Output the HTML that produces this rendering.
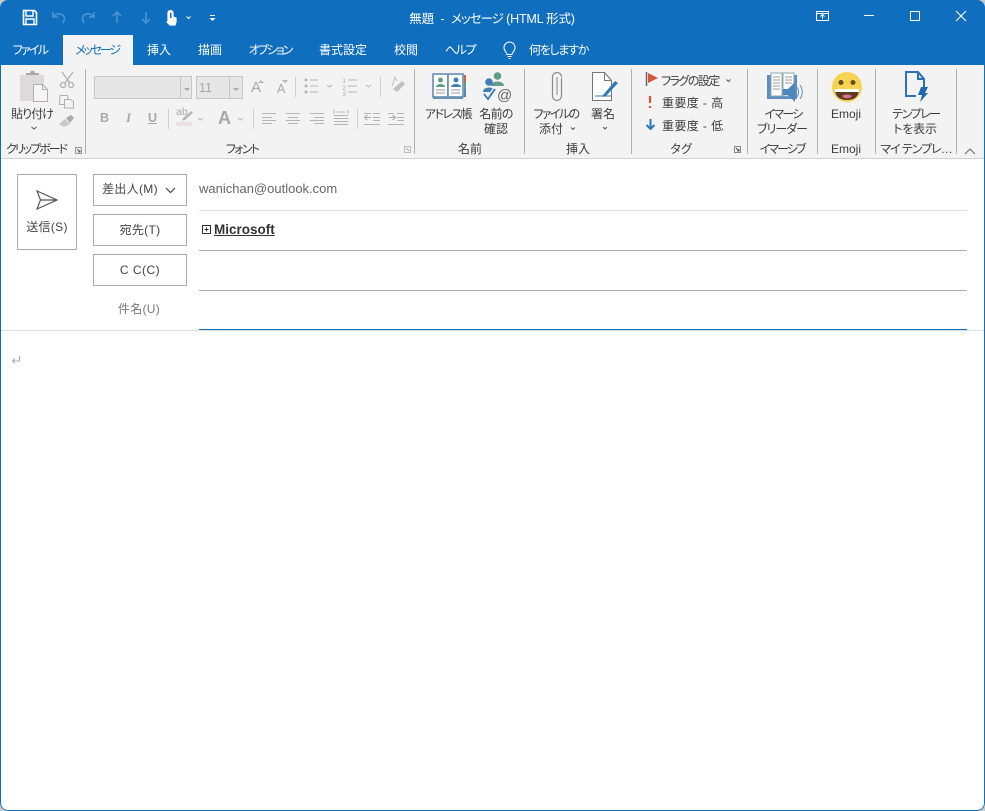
<!DOCTYPE html>
<html lang="ja"><head><meta charset="utf-8"><title>無題 - メッセージ (HTML 形式)</title>
<style>
html,body{margin:0;padding:0;background:#c8c8c8;}
body{width:985px;height:811px;overflow:hidden;position:relative;font-family:"Liberation Sans","Noto Sans CJK JP",sans-serif;font-feature-settings:"palt";}
#w{position:absolute;left:0;top:0;width:985px;height:811px;background:#fff;border-radius:8px 8px 8px 8px;overflow:hidden;}
.a{position:absolute;}
.t{position:absolute;white-space:nowrap;font-size:12px;line-height:16px;color:#3c3c3c;transform:translateX(-50%);}
.l{position:absolute;white-space:nowrap;font-size:12px;line-height:16px;color:#3c3c3c;}
.w{color:#fff;}
.sep{position:absolute;top:69px;width:1px;height:85px;background:#b0b0b0;}
.btn{position:absolute;left:93px;width:92px;height:30px;border:1px solid #ababab;background:#fff;}
svg{position:absolute;overflow:visible;}
.g{color:#a8a8a8;}
</style></head><body>
<div id="w">
<div class="a" style="left:0;top:0;width:985px;height:65px;background:#106ebe"></div>
<div class="a" style="left:0;top:65px;width:985px;height:93px;background:#f3f3f3"></div>
<div class="a" style="left:0;top:158px;width:985px;height:1px;background:#d2d2d2"></div>
<div class="a" style="left:63px;top:35px;width:70px;height:30px;background:#f3f3f3"></div>

<!-- QAT -->
<svg style="left:0;top:0" width="230" height="35" fill="none">
<path d="M23.500 10.500h11l2 2v12h-13z" stroke="#fff" stroke-width="1.600"/><path d="M26 11v5h7v-5M26 24v-5h8v5" stroke="#fff" stroke-width="1.400"/>
<g stroke="#4c93d0" stroke-width="1.600"><path d="M53 12v5h5M53.500 17c3-5 11-4 11 2 0 2-1 3-2 4"/><path d="M94 12v5h-5M93.500 17c-3-5-11-4-11 2 0 2 1 3 2 4"/><path d="M117 23V12M113 16l4-4 4 4"/><path d="M146 12v11M142 19l4 4 4-4"/></g>
<path d="M168 21v-8a2.500 2.500 0 0 1 5 0v4l3 1v4l-1 3h-5l-3-3z" fill="#fff" stroke="#fff" stroke-width="1.200"/><path d="M170 13a1 1 0 0 1 1.500 0v5h-1.500z" fill="#106ebe"/>
<path d="M186.500 16.500l2 2 2-2" stroke="#fff" stroke-width="1"/><path d="M210 15.500h5" stroke="#fff"/><path d="M209.500 18h6l-3 3z" fill="#fff"/>
</svg>
<div class="t w" style="left:492px;top:11px;font-size:12.500px;letter-spacing:-.2px">無題 &nbsp;- &nbsp;<span style="letter-spacing:-1px">メッセージ</span> (HTML 形式)</div>
<svg style="left:810px;top:4px" width="170" height="22" fill="none" stroke="#fff">
<path d="M6.500 7.500h12v9h-12zM6.500 9.500h12" stroke-width="1"/><path d="M12.500 15v-4M10.500 12.500l2-2 2 2" stroke-width="1"/>
<path d="M54 11.500h10"/><path d="M100.500 7.500h9v9h-9z"/><path d="M146 7l10 10M156 7l-10 10" stroke-width="1.100"/>
</svg>

<!-- tabs -->
<div class="t w" style="left:30px;top:42px;letter-spacing:-1.700px">ファイル</div>
<div class="t" style="left:97px;top:42px;color:#106ebe;letter-spacing:-2.200px">メッセージ</div>
<div class="t w" style="left:159px;top:42px">挿入</div>
<div class="t w" style="left:210px;top:42px">描画</div>
<div class="t w" style="left:270px;top:42px;letter-spacing:-2px">オプション</div>
<div class="t w" style="left:343px;top:42px">書式設定</div>
<div class="t w" style="left:406px;top:42px">校閲</div>
<div class="t w" style="left:460px;top:42px;letter-spacing:-1.300px">ヘルプ</div>
<svg style="left:500px;top:40px" width="20" height="20" fill="none" stroke="#fff"><path d="M7 14.500c0-2-3-3-3-7a5.500 5.500 0 0 1 11 0c0 4-3 5-3 7zM7.500 16.500h4M8.500 18.500h2" stroke-width="1"/></svg>
<div class="l w" style="left:529px;top:42px;letter-spacing:-1.300px">何をしますか</div>

<!-- separators -->
<div class="sep" style="left:85px"></div><div class="sep" style="left:414px"></div><div class="sep" style="left:524px"></div><div class="sep" style="left:631px"></div><div class="sep" style="left:747px"></div><div class="sep" style="left:817px"></div><div class="sep" style="left:875px"></div><div class="sep" style="left:956px"></div>

<!-- clipboard -->
<svg style="left:0;top:65px" width="90" height="90" fill="none">
<path d="M20 10h24v26H20z" fill="#dcdadb"/><path d="M26 10V8h4c0-3 5-3 5 0h4v2z" fill="#a9a7a8"/>
<path d="M33.500 19.500h9l5 5v12h-14z" fill="#f8f5f7" stroke="#b0b0b0"/><path d="M42.500 19.500v5h5" stroke="#b0b0b0"/>
<g stroke="#b0b0b0" stroke-width="1.300"><path d="M62 7l8 11M73 7l-8 11"/><circle cx="63" cy="20" r="2.500"/><circle cx="71" cy="20" r="2.500"/></g>
<path d="M60 30.500h7l1 1v8h-8.500z" fill="#f3f3f3" stroke="#b0b0b0"/><path d="M64.500 34.500h6l3 2v6.500h-9z" fill="#f3f3f3" stroke="#b0b0b0"/>
<path d="M66 53l5-3 3 3-4 5z" fill="#aaa"/><path d="M59 59l6-5 5 5-6 3z" fill="#c8c8c8"/>
<path d="M31.500 62l2.500 2 2.500-2" stroke="#555"/>
<path d="M75.500 82.500h6v6h-6z" stroke="#999"/><path d="M77 84l3 3M80 85v2h-2" stroke="#666"/>
</svg>
<div class="t" style="left:32px;top:106px;letter-spacing:-1px">貼り付け</div>
<div class="t" style="left:36px;top:141px;letter-spacing:-2px">クリップボード</div>

<!-- font -->
<div class="a" style="left:94px;top:76px;width:98px;height:23px;background:#e6e6e6;border:1px solid #c6c6c6;box-sizing:border-box"></div>
<div class="a" style="left:180px;top:76px;width:1px;height:23px;background:#c6c6c6"></div>
<div class="a" style="left:196px;top:76px;width:47px;height:23px;background:#e6e6e6;border:1px solid #c6c6c6;box-sizing:border-box"></div>
<div class="a" style="left:229px;top:76px;width:1px;height:23px;background:#c6c6c6"></div>
<div class="l g" style="left:199px;top:80px;font-size:12.500px">11</div>
<div class="l g" style="left:251px;top:80px;font-size:15px;line-height:16px">A</div>
<div class="l g" style="left:277px;top:82px;font-size:12.500px;line-height:14px">A</div>
<div class="l g" style="left:218px;top:110px;font-size:18px;font-weight:bold;">A</div>
<div class="l g" style="left:176px;top:106px;font-size:10.500px;line-height:12px">ab</div>
<div class="l g" style="left:342.500px;top:79px;font-size:6px;line-height:6.500px;white-space:pre">1
2
3</div>
<svg style="left:0;top:65px" width="415" height="93" fill="none">
<path d="M184 23l3 3 3-3zM233 23l3 3 3-3z" fill="#aaa"/>
<path d="M258 18h6l-3-3zM282 15h6l-3 3z" fill="#b5b5b5"/>
<path d="M295.500 12v20M380.500 12v20M168.500 44v20M253.500 44v20M357.500 44v20" stroke="#cfcfcf"/>
<g fill="#b5b5b5"><circle cx="306" cy="15" r="1.500"/><circle cx="306" cy="21" r="1.500"/><circle cx="306" cy="27" r="1.500"/></g>
<path d="M310 15h8M310 21h8M310 27h8M348 15h9M348 21h9M348 27h9" stroke="#b5b5b5"/>
<path d="M327 20l2.500 2 2.500-2M366 20l2.500 2 2.500-2M198 53l2.500 2 2.500-2M238 53l2.500 2 2.500-2" stroke="#b5b5b5"/>
<path d="M392 21l3-9 2 4" stroke="#c0c0c0"/><path d="M393 24l9-8 3 3-8 8z" fill="#c0c0c0"/>
<path d="M176 57h16v4h-16z" fill="#eadfe7"/><path d="M183 55l9-8" stroke="#b0b0b0" stroke-width="2.400"/>
<path d="M262 48.500h14M262 52.500h10M262 55.500h14M262 58.500h10M286 48.500h14M288 52.500h10M286 55.500h14M288 58.500h10M310 48.500h14M314 52.500h10M310 55.500h14M314 58.500h10M334 50.500h14M334 53.500h14M334 56.500h14M334 59.500h14M334 45v4M348 45v4M337 47h8" stroke="#b5b5b5"/>
<path d="M373 48.500h7M373 52.500h7M373 55.500h7M364 59.500h16M397 48.500h7M397 52.500h7M397 55.500h7M388 59.500h16" stroke="#b5b5b5"/>
<path d="M364 48.500h7M388 48.500h6" stroke="#b5b5b5"/>
<path d="M365 52.500h6M367.500 50l-3 2.500 3 2.500M389 52.500h6M392.500 50l3 2.500-3 2.500" stroke="#a8a8a8"/>
<path d="M404.500 81.500h6v6h-6z" stroke="#bbb"/><path d="M406 83l3 3" stroke="#aaa"/>
</svg>
<div class="l g" style="left:100px;top:110px;font-weight:bold;font-size:12.500px">B</div>
<div class="l g" style="left:126px;top:110px;font-family:'Liberation Serif';font-style:italic;font-weight:bold;font-size:13px">I</div>
<div class="l g" style="left:148px;top:110px;font-weight:bold;font-size:12.500px;text-decoration:underline">U</div>
<div class="t" style="left:242px;top:141px;letter-spacing:-1.700px">フォント</div>

<!-- names -->
<svg style="left:425px;top:65px" width="100" height="45" fill="none">
<path d="M8 9h14c1 0 1 1 1 2v21H8z" fill="#fff" stroke="#5f84ad" stroke-width="1.500"/><path d="M38 9H24c-1 0-1 1-1 2v21h15z" fill="#fff" stroke="#5f84ad" stroke-width="1.500"/>
<path d="M8 33h30" stroke="#6b8fb8" stroke-width="2"/><path d="M39 10h2v7h-2z" fill="#c8643c"/><path d="M39 17h2v7h-2z" fill="#5b9e84"/><path d="M39 24h2v8h-2z" fill="#4a86c0"/>
<circle cx="15.500" cy="15" r="2.500" fill="#5f9e88"/><path d="M11 22c0-4 9-4 9 0z" fill="#5f9e88"/><circle cx="31" cy="15" r="2.500" fill="#3f7fb8"/><path d="M26 22c0-4 10-4 10 0z" fill="#3f7fb8"/>
<path d="M11 25h9M11 28h9M26 25h9M26 28h9" stroke="#999"/>
<circle cx="72.500" cy="11" r="3.800" fill="#5f9e88"/><path d="M66 21c0-6 13-6 13 0z" fill="#5f9e88"/><circle cx="64" cy="17" r="3.800" fill="#3f7fb8"/><path d="M58 27c0-6 12-6 12 0z" fill="#3f7fb8"/>
<path d="M59 29l4 5 7-10" stroke="#f3f3f3" stroke-width="4.500"/><path d="M59 29l4 5 7-10" stroke="#2f78b8" stroke-width="1.800"/>
</svg>
<div class="l" style="left:497px;top:87px;font-size:15px;line-height:18px;color:#666">@</div>
<div class="t" style="left:448px;top:106px;letter-spacing:-1.600px">アドレス帳</div>
<div class="t" style="left:496px;top:106px;letter-spacing:-.7px">名前の</div>
<div class="t" style="left:496px;top:121px">確認</div>
<div class="t" style="left:470px;top:141px">名前</div>

<!-- insert -->
<svg style="left:530px;top:65px" width="100" height="75" fill="none">
<path d="M31.500 13v18a4 4 0 0 1-9 0V12a4.500 4.500 0 0 1 9 0" stroke="#8a8a8a" stroke-width="1.200"/><path d="M27 12v18" stroke="#8a8a8a"/>
<path d="M62.500 7.500h12l7 8v20h-19z" fill="#fff" stroke="#777"/><path d="M74.500 7.500v8h7" stroke="#777"/>
<path d="M65 31h17" stroke="#2f78b8"/><path d="M73 30l-1 1 1 1 3-1 12-13-3-2z" fill="#2f78b8"/>
<path d="M41 62.500l2 2 2-2M73 62l2 2 2-2" stroke="#555"/>
</svg>
<div class="t" style="left:556px;top:106px;letter-spacing:-1.600px">ファイルの</div>
<div class="t" style="left:551px;top:121px">添付</div>
<div class="t" style="left:603px;top:106px">署名</div>
<div class="t" style="left:578px;top:141px">挿入</div>

<!-- tags -->
<svg style="left:640px;top:65px" width="105" height="93" fill="none">
<path d="M6.500 7v14" stroke="#666" stroke-width="1.500"/><path d="M8 8l10 5-10 5z" fill="#d9553a"/>
<path d="M10 31v7" stroke="#d9553a" stroke-width="2.200"/><path d="M10 41v2" stroke="#d9553a" stroke-width="2.200"/>
<path d="M10.500 54v10M6.500 60l4 4 4-4" stroke="#2f78b8" stroke-width="2"/>
<path d="M86.500 14.500l2 2 2-2" stroke="#555"/>
<path d="M94.500 81.500h6v6h-6z" stroke="#888"/><path d="M96 83l3 3M99 84v2h-2" stroke="#555"/>
</svg>
<div class="l" style="left:661px;top:73px;letter-spacing:-1.500px">フラグの設定</div>
<div class="l" style="left:662px;top:95px;letter-spacing:.4px">重要度 - 高</div>
<div class="l" style="left:662px;top:118px;letter-spacing:.4px">重要度 - 低</div>
<div class="t" style="left:681px;top:141px">タグ</div>

<!-- immersive -->
<svg style="left:765px;top:65px" width="40" height="40" fill="none">
<path d="M2 10h30v24H2z" fill="#5b8fc4"/><path d="M6 8h11v23H6zM18 8h11v23H18z" fill="#fff" stroke="#8aa"/>
<path d="M8 12h7M8 15h7M8 18h7M8 21h7M8 24h7M20 12h7M20 15h7M20 18h7" stroke="#999"/>
<path d="M18 24h5l7-7v20l-7-7h-5z" fill="#4d86bd"/><path d="M32 22c2 3 2 7 0 10M35 20c3 4 3 10 0 14" stroke="#5b8fc4"/>
</svg>
<div class="t" style="left:783px;top:106px;letter-spacing:-1.700px">イマーシ</div>
<div class="t" style="left:782px;top:121px;letter-spacing:-1px">ブリーダー</div>
<div class="t" style="left:782px;top:141px;letter-spacing:-2px">イマーシブ</div>

<!-- emoji -->
<svg style="left:825px;top:65px" width="45" height="45">
<circle cx="22" cy="22" r="15" fill="#f7d354"/><circle cx="16" cy="17.500" r="2.500" fill="#6b4a2a"/><circle cx="28" cy="17.500" r="2.500" fill="#6b4a2a"/>
<path d="M10 24h24c0 8-5 11-12 11s-12-3-12-11z" fill="#5d3a25"/><path d="M10 24h24v3H10z" fill="#fff"/><path d="M17 31c2-2 8-2 10 0-2 3-8 3-10 0z" fill="#d9748a"/>
</svg>
<div class="t" style="left:846px;top:106px">Emoji</div>
<div class="t" style="left:846px;top:141px">Emoji</div>

<!-- template -->
<svg style="left:890px;top:65px" width="45" height="45" fill="none">
<path d="M26 31H16V7h12l6 7v8" stroke="#2a72b8" stroke-width="2"/><path d="M28 7v7h6" stroke="#2a72b8" stroke-width="2"/>
<path d="M31 22h7l-3 6h3l-8 9 2-7h-4z" fill="#1f68ac"/>
</svg>
<div class="t" style="left:916px;top:106px;letter-spacing:-1.400px">テンプレー</div>
<div class="t" style="left:915px;top:121px;letter-spacing:-.2px">トを表示</div>
<div class="t" style="left:916px;top:141px;letter-spacing:-1px">マイ テンプレ…</div>
<svg style="left:964px;top:148px" width="14" height="8" fill="none"><path d="M1 6l5-5 5 5" stroke="#666"/></svg>

<!-- form -->
<div class="a" style="left:17px;top:174px;width:58px;height:74px;border:1px solid #ababab"></div>
<svg style="left:36px;top:190px" width="24" height="20" fill="none"><path d="M1 1l20 9-20 9 3.500-9zM4.500 10H21" stroke="#555" stroke-width="1.200"/></svg>
<div class="t" style="left:47px;top:219px;color:#444;letter-spacing:.3px">送信(S)</div>

<div class="btn" style="top:174px"></div><div class="btn" style="top:214px"></div><div class="btn" style="top:254px"></div>
<div class="t" style="left:130px;top:181px;color:#444;letter-spacing:.3px">差出人(M)</div>
<svg style="left:165px;top:187px" width="12" height="8" fill="none"><path d="M1 1l4.500 4.500L10 1" stroke="#444" stroke-width="1.200"/></svg>
<div class="t" style="left:140px;top:222px;color:#444;letter-spacing:.3px">宛先(T)</div>
<div class="t" style="left:140px;top:262px;color:#444;letter-spacing:.5px">C C(C)</div>
<div class="t" style="left:139px;top:301px;color:#777;letter-spacing:.3px">件名(U)</div>

<div class="l" style="left:199px;top:181px;color:#666;font-size:13px">wanichan@outlook.com</div>
<div class="a" style="left:199px;top:210px;width:768px;height:1px;background:#dedede"></div>
<div class="a" style="left:199px;top:250px;width:768px;height:1px;background:#ababab"></div>
<div class="a" style="left:199px;top:290px;width:768px;height:1px;background:#ababab"></div>
<div class="a" style="left:199px;top:329px;width:768px;height:1px;background:#106ebe"></div>
<div class="a" style="left:0;top:330px;width:985px;height:1px;background:#dedede"></div>
<svg style="left:202px;top:225px" width="10" height="10" fill="none"><path d="M.5.500h8v8h-8zM2.500 4.500h4M4.500 2.500v4" stroke="#333"/></svg>
<div class="l" style="left:214px;top:222px;font-weight:bold;font-size:13.500px;color:#333;text-decoration:underline">Microsoft</div>
<svg style="left:11px;top:355px" width="10" height="10" fill="none"><path d="M8.500 1v5H1.500M4 3.500L1.500 6 4 8.500" stroke="#aaa"/></svg>

<!-- border -->
<div class="a" style="left:0;top:0;width:983px;height:809px;border:1px solid #106ebe;border-radius:8px;"></div>
</div>
</body></html>
